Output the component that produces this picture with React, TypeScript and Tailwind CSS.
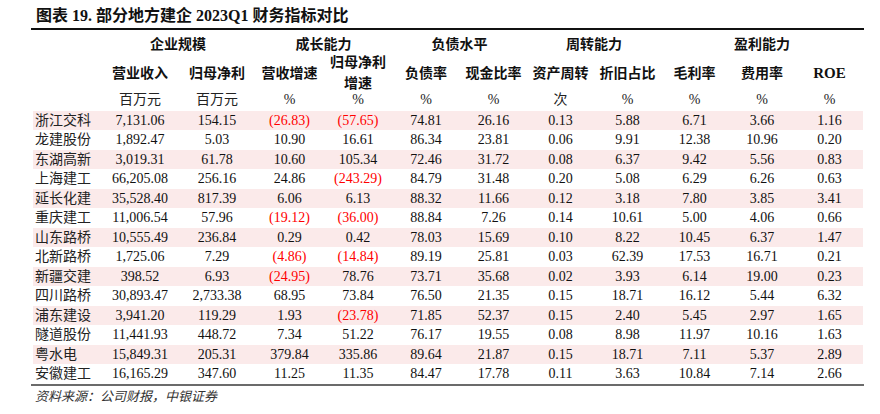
import React from 'react';

const cols = 'grid grid-cols-[68px_78px_76px_69px_68px_68px_67px_67px_67px_67px_68px_67px]';

const rows: string[][] = [
    ['浙江交科', '7,131.06', '154.15', '(26.83)', '(57.65)', '74.81', '26.16', '0.13', '5.88', '6.71', '3.66', '1.16'],
    ['龙建股份', '1,892.47', '5.03', '10.90', '16.61', '86.34', '23.81', '0.06', '9.91', '12.38', '10.96', '0.20'],
    ['东湖高新', '3,019.31', '61.78', '10.60', '105.34', '72.46', '31.72', '0.08', '6.37', '9.42', '5.56', '0.83'],
    ['上海建工', '66,205.08', '256.16', '24.86', '(243.29)', '84.79', '31.48', '0.20', '5.08', '6.29', '6.26', '0.63'],
    ['延长化建', '35,528.40', '817.39', '6.06', '6.13', '88.32', '11.66', '0.12', '3.18', '7.80', '3.85', '3.41'],
    ['重庆建工', '11,006.54', '57.96', '(19.12)', '(36.00)', '88.84', '7.26', '0.14', '10.61', '5.00', '4.06', '0.66'],
    ['山东路桥', '10,555.49', '236.84', '0.29', '0.42', '78.03', '15.69', '0.10', '8.22', '10.45', '6.37', '1.47'],
    ['北新路桥', '1,725.06', '7.29', '(4.86)', '(14.84)', '89.19', '25.81', '0.03', '62.39', '17.53', '16.71', '0.21'],
    ['新疆交建', '398.52', '6.93', '(24.95)', '78.76', '73.71', '35.68', '0.02', '3.93', '6.14', '19.00', '0.23'],
    ['四川路桥', '30,893.47', '2,733.38', '68.95', '73.84', '76.50', '21.35', '0.15', '18.71', '16.12', '5.44', '6.32'],
    ['浦东建设', '3,941.20', '119.29', '1.93', '(23.78)', '71.85', '52.37', '0.15', '2.40', '5.45', '2.97', '1.65'],
    ['隧道股份', '11,441.93', '448.72', '7.34', '51.22', '76.17', '19.55', '0.08', '8.98', '11.97', '10.16', '1.63'],
    ['粤水电', '15,849.31', '205.31', '379.84', '335.86', '89.64', '21.87', '0.15', '18.71', '7.11', '5.37', '2.89'],
    ['安徽建工', '16,165.29', '347.60', '11.25', '11.35', '84.47', '17.78', '0.11', '3.63', '10.84', '7.14', '2.66'],
];

const units = ['百万元', '百万元', '%', '%', '%', '%', '次', '%', '%', '%', '%'];

export default function App() {
    return (
        <div className="w-[880px] h-[414px] bg-white text-[#111] font-['Liberation_Serif','Noto_Sans_CJK_SC',serif] overflow-hidden">
            <div className="pt-[6px] pl-[36px] h-[26px] text-[16px] leading-[20px] font-bold">
                图表 19. 部分地方建企 2023Q1 财务指标对比
            </div>

            <div className="ml-[31px] mt-[2px] w-[833px] h-[1.5px] bg-[#111]" />

            <div className="ml-[33px] w-[830px]">
                {/* header */}
                <div className={`${cols} grid-rows-[29px] items-center text-center text-[14px] font-bold`}>
                    <div />
                    <div className="col-span-2">企业规模</div>
                    <div className="col-span-2">成长能力</div>
                    <div className="col-span-2">负债水平</div>
                    <div className="col-span-2">周转能力</div>
                    <div className="col-span-3">盈利能力</div>
                </div>
                <div className={`${cols} grid-rows-[29px] items-center text-center text-[14px] font-bold`}>
                    <div />
                    <div>营业收入</div>
                    <div>归母净利</div>
                    <div>营收增速</div>
                    <div className="leading-[21px]">归母净利<br />增速</div>
                    <div>负债率</div>
                    <div>现金比率</div>
                    <div>资产周转</div>
                    <div>折旧占比</div>
                    <div>毛利率</div>
                    <div>费用率</div>
                    <div className="text-[15px]">ROE</div>
                </div>
                <div className={`${cols} grid-rows-[23px] items-center text-center text-[14px] text-[#222]`}>
                    <div />
                    {units.map((u, i) => (
                        <div key={i}>{u}</div>
                    ))}
                </div>

                {/* body */}
                {rows.map((r, i) => (
                    <div
                        key={r[0]}
                        className={`${cols} grid-rows-[19.5px] items-center text-[14px] leading-[19px] ${i % 2 === 0 ? 'bg-[#fbeaea]' : ''}`}
                    >
                        <div className="pl-[2px] text-[#222]">{r[0]}</div>
                        {r.slice(1).map((v, j) => (
                            <div key={j} className={`text-center ${v.startsWith('(') ? 'text-[#ff0000]' : ''}`}>
                                {v}
                            </div>
                        ))}
                    </div>
                ))}
            </div>

            <div className="ml-[31px] w-[833px] h-[2px] bg-[#6b6b6b]" />

            <div className="pl-[35px] pt-[2px] text-[13px] leading-[18px] italic text-[#333]">
                资料来源：公司财报，中银证券
            </div>
        </div>
    );
}
